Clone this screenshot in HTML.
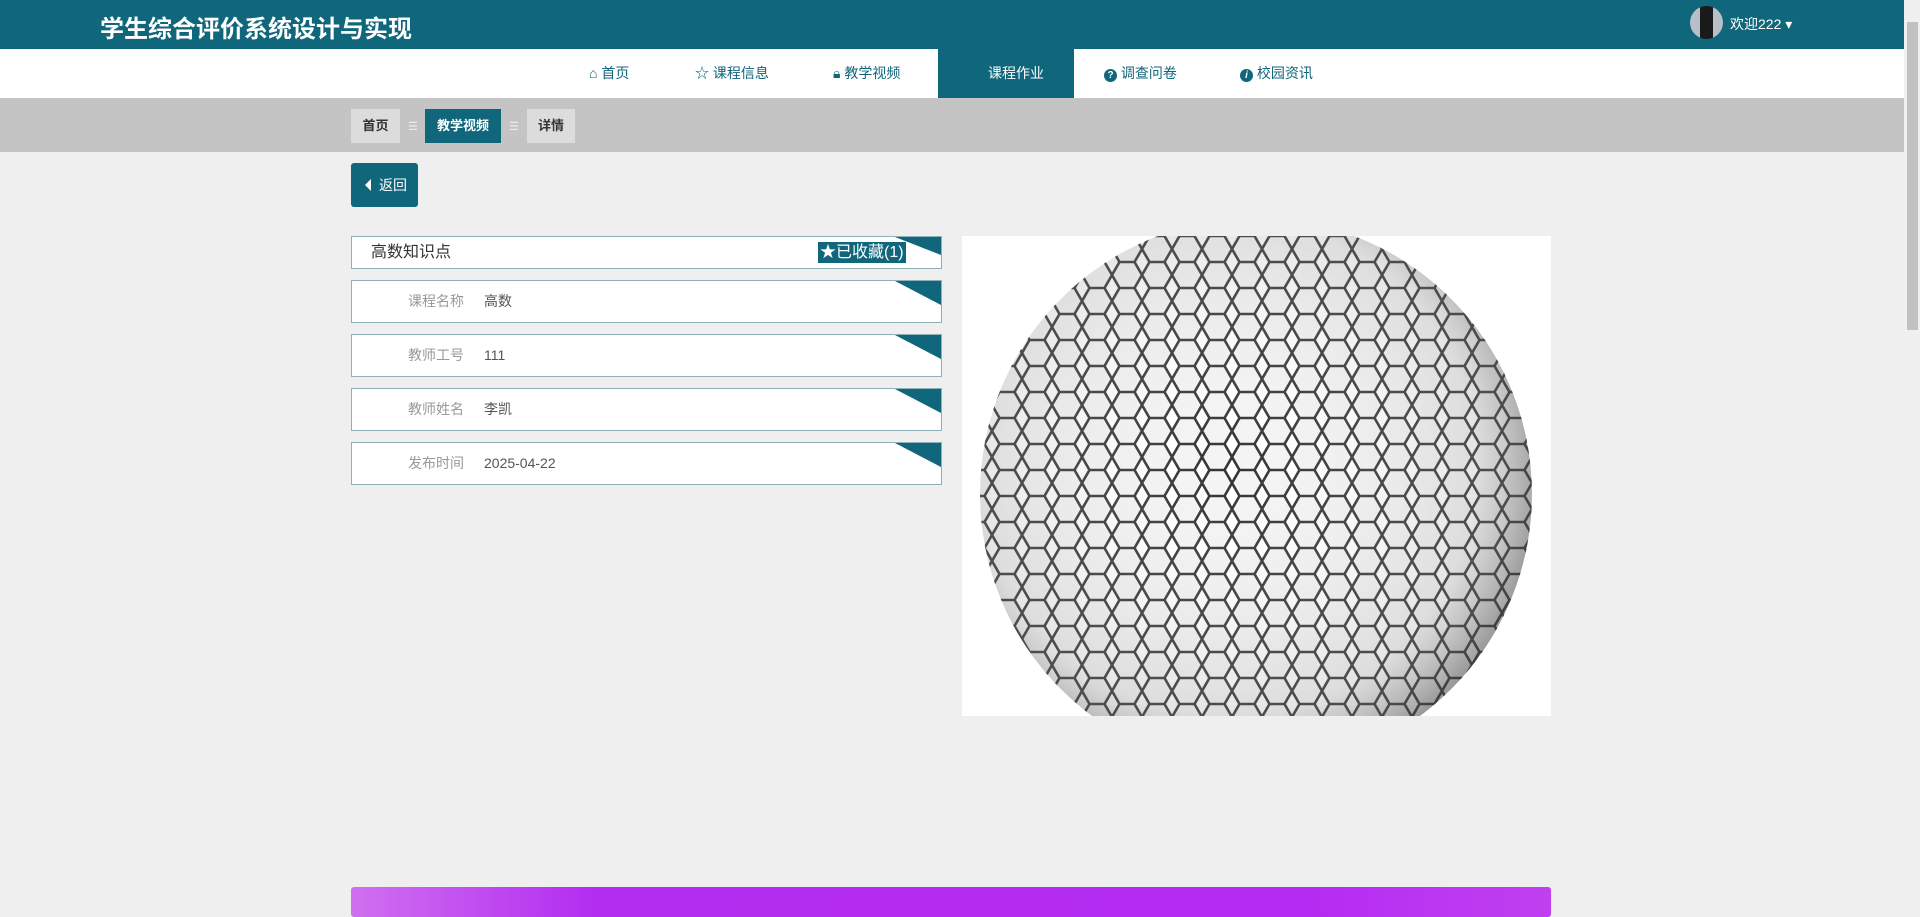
<!DOCTYPE html>
<html><head><meta charset="utf-8"><style>
*{margin:0;padding:0;box-sizing:border-box}
body{width:1920px;height:912px;overflow:hidden;background:#efefef;font-family:"Liberation Sans","Noto Sans CJK SC",sans-serif;position:relative}
.hd{position:absolute;left:0;top:0;width:1904px;height:49px;background:#10667b}
.title{position:absolute;left:100px;top:9px;color:#fff;font-size:24px;font-weight:bold}
.nav{position:absolute;left:0;top:49px;width:1904px;height:49px;background:#fff}
.ni{position:absolute;top:0;height:49px;line-height:49px;font-size:14px;color:#10667b}
.ni.act{background:#10667b;color:#fff;padding-left:50px;width:136px}
.bc{position:absolute;left:0;top:98px;width:1904px;height:54px;background:#c4c4c5}
.bi{position:absolute;top:11px;height:34px;line-height:34px;font-size:13px;text-align:center;background:#dcdcdc;color:#333;font-weight:bold}
.sep{position:absolute;top:22px;color:#eee;font-size:11px}
.back{position:absolute;left:351px;top:163px;width:67px;height:44px;background:#10667b;border-radius:3px;color:#fff;font-size:14px;line-height:44px;padding-left:28px}
.back:before{content:"";position:absolute;left:14px;top:16px;border-right:6px solid #fff;border-top:6px solid transparent;border-bottom:6px solid transparent}
.box{position:absolute;left:351px;width:591px;background:#fff;border:1px solid #8fb0b8;overflow:hidden}
.box .c{position:absolute;right:0;top:0;width:0;height:0;border-top:18px solid #10667b;border-left:46px solid transparent}
.lb{position:absolute;left:56px;top:0;color:#999;font-size:14px;width:60px;line-height:41px}
.vl{position:absolute;left:132px;top:0;color:#555;font-size:14px;line-height:41px}
.scr{position:absolute;right:0;top:0;width:16px;height:912px;background:#f0f0f0}
.thumb{position:absolute;right:2px;top:22px;width:11px;height:308px;background:#c1c1c1}
</style></head><body>
<div class="hd"><div class="title">学生综合评价系统设计与实现</div>
<div style="position:absolute;left:1690px;top:6px;width:33px;height:33px;border-radius:50%;background:linear-gradient(90deg,#b8bfc6 0 30%,#1a1a1a 30% 70%,#b8bfc6 70%)"></div>
<div style="position:absolute;left:1730px;top:14px;color:#fff;font-size:14px">欢迎222 ▾</div></div>
<div class="nav">
<div class="ni" style="left:589px">⌂ 首页</div>
<div class="ni" style="left:695px">☆ 课程信息</div>
<div class="ni" style="left:833px">🔒︎ 教学视频</div>
<div class="ni act" style="left:938px">课程作业</div>
<div class="ni" style="left:1104px"><span style="display:inline-block;width:13px;height:13px;border-radius:50%;background:#10667b;color:#fff;font-size:10px;line-height:13px;text-align:center;font-weight:bold">?</span> 调查问卷</div>
<div class="ni" style="left:1240px"><span style="display:inline-block;width:13px;height:13px;border-radius:50%;background:#10667b;color:#fff;font-size:10px;line-height:13px;text-align:center;font-weight:bold;font-style:italic">i</span> 校园资讯</div>
</div>
<div class="bc">
<div class="bi" style="left:351px;width:49px">首页</div>
<div class="sep" style="left:408px">☰</div>
<div class="bi" style="left:425px;width:76px;background:#10667b;color:#fff">教学视频</div>
<div class="sep" style="left:509px">☰</div>
<div class="bi" style="left:527px;width:48px">详情</div>
</div>
<div class="back">返回</div>
<div class="box" style="top:236px;height:33px"><div class="c"></div>
<div style="position:absolute;left:19px;top:0;line-height:31px;font-size:16px;color:#333">高数知识点</div>
<div style="position:absolute;left:466px;top:5px;height:21px;background:#10667b;color:#fff;font-size:16px;line-height:21px;padding:0 2px">★已收藏(1)</div></div>
<div class="box" style="top:280px;height:43px"><div class="c" style="border-top-width:24px"></div><div class="lb">课程名称</div><div class="vl">高数</div></div>
<div class="box" style="top:334px;height:43px"><div class="c" style="border-top-width:24px"></div><div class="lb">教师工号</div><div class="vl">111</div></div>
<div class="box" style="top:388px;height:43px"><div class="c" style="border-top-width:24px"></div><div class="lb">教师姓名</div><div class="vl">李凯</div></div>
<div class="box" style="top:442px;height:43px"><div class="c" style="border-top-width:24px"></div><div class="lb">发布时间</div><div class="vl">2025-04-22</div></div>
<svg style="position:absolute;left:962px;top:236px" width="589" height="480">
<defs>
<radialGradient id="g" cx="45%" cy="45%" r="60%"><stop offset="0" stop-color="#fff" stop-opacity="0"/><stop offset=".75" stop-color="#999" stop-opacity=".25"/><stop offset="1" stop-color="#333" stop-opacity=".6"/></radialGradient>
<pattern id="h" width="30" height="26" patternUnits="userSpaceOnUse"><path d="M7.5 0h15l7.5 13-7.5 13h-15L0 13z" fill="#f4f4f4" stroke="#333" stroke-width="2.6"/></pattern>
<clipPath id="cp"><circle cx="294" cy="258" r="276"/></clipPath>
</defs>
<rect width="589" height="480" fill="#fff"/>
<g clip-path="url(#cp)"><rect width="589" height="560" fill="url(#h)"/><circle cx="294" cy="258" r="276" fill="url(#g)"/></g>
</svg>
<div style="position:absolute;left:351px;top:887px;width:1200px;height:30px;background:linear-gradient(90deg,#d070f0,#b32ef0 20%,#b52cf2 80%,#c040f0);border-radius:3px"></div>
<div class="scr"><div class="thumb"></div></div>
</body></html>
